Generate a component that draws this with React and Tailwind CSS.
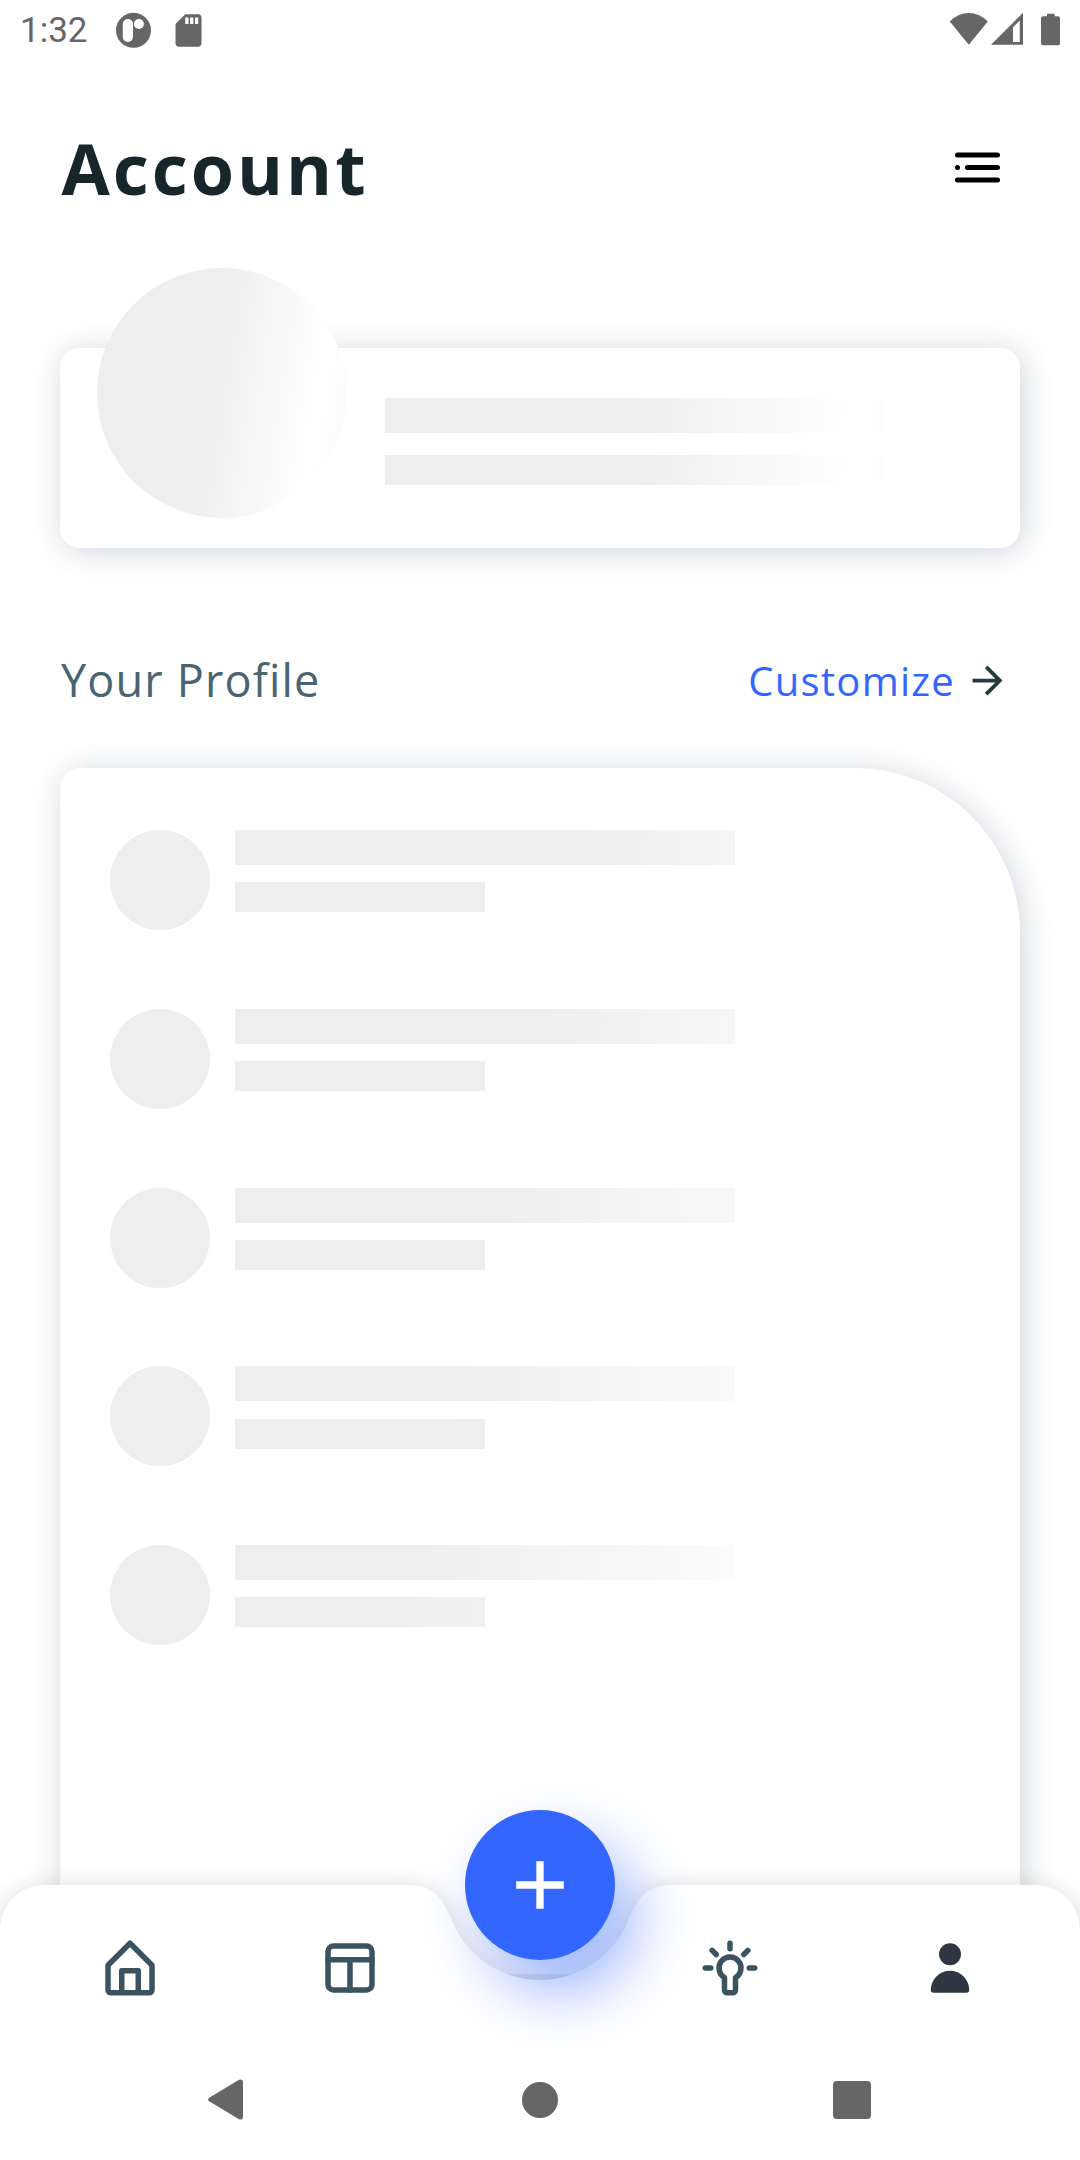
const GRAY = '#666666';

function StatusBar() {
  return (
    <div className="flex h-[60px] shrink-0 items-start text-[#666666]">
      <span className="ml-[20px] mt-[10px] w-[96px] font-[Roboto] text-[35px] leading-[41px]">1:32</span>
      <svg className="mt-[12px] h-9 w-9" viewBox="0 0 36 36" fill={GRAY}>
        <circle cx="17.5" cy="18.3" r="17.5" />
        <rect x="6.8" y="7" width="10.2" height="23" rx="5" fill="#fff" />
        <circle cx="22.9" cy="12" r="5" fill="#fff" />
      </svg>
      <svg className="ml-[17px] mt-[11px] h-[39px] w-[39px]" viewBox="0 0 24 24" fill={GRAY}>
        <path d="M18 2h-8L4.02 8 4 20c0 1.1.9 2 2 2h12c1.1 0 2-.9 2-2V4c0-1.1-.9-2-2-2zm-6 6h-2V4h2v4zm3 0h-2V4h2v4zm3 0h-2V4h2v4z" />
      </svg>
      <svg className="ml-auto mr-[19px] mt-[12px] h-9 w-[112px]" viewBox="0 0 112 36" fill={GRAY}>
        <path d="M0.8 9.5Q9 1 19.8 1T38.8 9.5L19.8 32.7Z" />
        <path fillRule="evenodd" d="M42 32.7L74 0.7V32.7ZM64 15.2V30H70.8V8.4Z" />
        <path d="M98 1.7h7.6v2.6h3.4a2 2 0 0 1 2 2v25a2 2 0 0 1-2 2h-15a2 2 0 0 1-2-2v-25a2 2 0 0 1 2-2h4Z" />
      </svg>
    </div>
  );
}

function Header() {
  return (
    <header className="flex h-[208px] shrink-0 items-start justify-between pl-[61.5px] pr-[80px]">
      <h1 className="mt-[61px] font-['Open_Sans'] text-[70px] font-bold leading-[95px] tracking-[3px] text-[#17262b]">
        Account
      </h1>
      <svg className="mt-[92px] h-[31px] w-[45px]" viewBox="0 0 45 31" stroke="#000" strokeWidth="5" strokeLinecap="round">
        <path d="M2.5 3h40M2.5 15.5h.01M12.5 15.5h30M2.5 28h40" />
      </svg>
    </header>
  );
}

function UserCard() {
  return (
    <section className="mx-[60px] mt-[80px] flex h-[200px] shrink-0 rounded-[20px] bg-white shadow-[3px_3px_32px_rgba(40,60,85,0.21)]">
      <div className="-mt-[80px] ml-[37px] h-[250px] w-[250px] rounded-full bg-[linear-gradient(99deg,#eee_45%,#fff_84%,#eee_123%)]" />
      <div className="ml-[38px] mt-[50px] flex flex-col gap-[22px]">
        <div className="h-[35px] w-[500px] bg-[linear-gradient(94deg,#eee_49%,#fff_94.5%,#eee_140%)]" />
        <div className="h-[30px] w-[500px] bg-[linear-gradient(94deg,#eee_49%,#fff_94.5%,#eee_140%)]" />
      </div>
    </section>
  );
}

function SectionTitle() {
  return (
    <div className="mt-[97px] flex h-[70px] shrink-0 items-center justify-between pl-[61px] pr-[70px] font-['Open_Sans']">
      <h2 className="text-[45px] tracking-[1.15px] text-[#4a6572]">Your Profile</h2>
      <a className="flex items-center gap-[10px] text-[40px] tracking-[1.25px] text-[#3366ff]">
        <span className="pt-[2px]">Customize</span>
        <svg className="h-[45px] w-[45px]" viewBox="0 0 24 24" fill="#263840">
          <path d="M12 4l-1.41 1.41L16.17 11H4v2h12.17l-5.58 5.59L12 20l8-8z" />
        </svg>
      </a>
    </div>
  );
}

const rows = [
  ['bg-[linear-gradient(99deg,#eee_67%,#fff_149%)]', 'bg-[#eee]'],
  ['bg-[linear-gradient(99deg,#eee_59%,#fff_141%)]', 'bg-[#eee]'],
  ['bg-[linear-gradient(99deg,#eee_51%,#fff_133%)]', 'bg-[#eee]'],
  ['bg-[linear-gradient(99deg,#eee_43%,#fff_125%)]', 'bg-[linear-gradient(99deg,#eee_82%,#fff_246%)]'],
  ['bg-[linear-gradient(99deg,#eee_35%,#fff_117%)]', 'bg-[linear-gradient(99deg,#eee_65%,#fff_229%)]'],
];

function ProfileList() {
  return (
    <section className="mx-[60px] mt-[53px] flex h-[1250px] shrink-0 flex-col gap-[78.75px] rounded-tl-[20px] rounded-tr-[165px] bg-white pl-[50px] pt-[62px] shadow-[3px_3px_32px_rgba(40,60,85,0.21)]">
      {rows.map(([title, sub], i) => (
        <div key={i} className="flex h-[100px] gap-[25px]">
          <div className="h-[100px] w-[100px] rounded-full bg-[#eee]" />
          <div className="flex flex-col gap-[17.4px]">
            <div className={`h-[35px] w-[500px] ${title}`} />
            <div className={`h-[30px] w-[250px] ${sub}`} />
          </div>
        </div>
      ))}
    </section>
  );
}

function TabIcon({ children, filled }) {
  return filled ? (
    <svg className="h-[66px] w-[66px]" viewBox="0 0 24 24" fill="#2f3743">{children}</svg>
  ) : (
    <svg className="h-[66px] w-[66px]" viewBox="0 0 24 24" fill="none" stroke="#3b5360" strokeWidth="2" strokeLinecap="round" strokeLinejoin="round">
      {children}
    </svg>
  );
}

function BottomBar() {
  return (
    <nav className="absolute inset-x-0 bottom-0 h-[275px]">
      <svg className="absolute inset-0 h-full w-full overflow-visible" viewBox="0 0 1080 275">
        <path d="M430 89H650V100H430Z" fill="#000" fillOpacity="0.08" />
        <path
          className="drop-shadow-[0_2px_12px_rgba(0,0,0,0.15)]"
          d="M0 47C0 18 20 0 47 0H409C433 0 443 14 451.700 35A95 95 0 0 0 628.300 35C637 14 647 0 671 0H1033C1060 0 1080 18 1080 47V275H0Z"
          fill="#fff"
        />
      </svg>
      <button className="absolute left-[465px] top-[-75px] flex h-[150px] w-[150px] items-center justify-center rounded-full bg-[#3366ff] shadow-[20px_32px_60px_rgba(51,102,255,0.48)]">
        <svg className="h-12 w-12" viewBox="0 0 48 48" stroke="#fff" strokeWidth="7.3">
          <path d="M24 0.2V47.8M0.2 24H47.8" />
        </svg>
      </button>
      <div className="relative flex pl-[97px] pt-[49.5px]">
        <TabIcon>
          <path d="M4 11l8-8 8 8v9a1 1 0 0 1-1 1H5a1 1 0 0 1-1-1zM9 21v-8h6v8" />
        </TabIcon>
        <div className="ml-[154px] h-[66px]">
          <TabIcon>
            <rect x="4" y="4" width="16" height="16" rx="2" />
            <path d="M4 9h16M12 9v11" />
          </TabIcon>
        </div>
        <div className="ml-[314px] h-[66px]">
          <TabIcon>
            <path d="M10 15.46V20a1 1 0 0 0 1 1h2a1 1 0 0 0 1-1v-4.54a4 4 0 1 0-4 0z" />
            <path d="M12 3v2M3 12h2M19 12h2M5.5 5.6l1.5 1.5M18.5 5.6L17 7.1" />
          </TabIcon>
        </div>
        <div className="ml-[154px] h-[66px]">
          <TabIcon filled>
            <circle cx="12" cy="7" r="4" />
            <path d="M5 20a7 7 0 0 1 14 0 1 1 0 0 1-1 1H6a1 1 0 0 1-1-1z" />
          </TabIcon>
        </div>
      </div>
      <div className="relative mt-[78.5px] flex h-[41px] items-center pl-[208px]">
        <svg className="h-[41px] w-[35px]" viewBox="0 0 35 41" fill={GRAY}>
          <path d="M1.2 18.7L31 0.8Q35 -0.6 35 3V38Q35 41.600 31 40.200L1.200 22.300Q-1 20.500 1.200 18.700Z" />
        </svg>
        <div className="ml-[279px] h-[36px] w-[36px] rounded-full bg-[#666666]" />
        <div className="ml-[275px] h-[38px] w-[38px] rounded-[4px] bg-[#666666]" />
      </div>
    </nav>
  );
}

export default function App() {
  return (
    <main className="relative flex h-[2160px] w-[1080px] flex-col overflow-hidden bg-white">
      <StatusBar />
      <Header />
      <UserCard />
      <SectionTitle />
      <ProfileList />
      <BottomBar />
    </main>
  );
}
